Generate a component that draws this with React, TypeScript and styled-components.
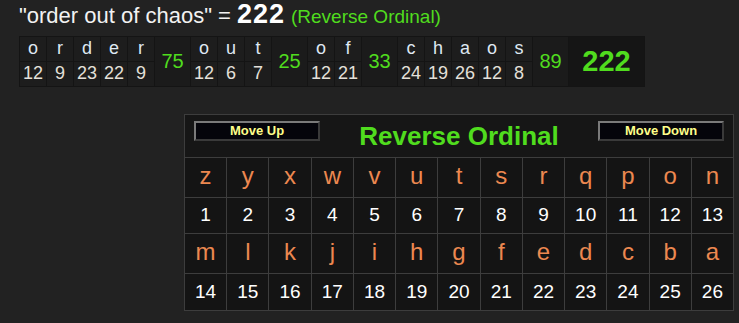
import React from "react";
import styled, { createGlobalStyle } from "styled-components";

const GlobalStyle = createGlobalStyle`
  body {
    margin: 0;
    background: #222222;
    font-family: "Liberation Sans", Arial, sans-serif;
  }
`;

const GREEN = "#50dc1e";
const LINE = "#3d3d3d";

const Page = styled.div`
  width: 739px;
  height: 323px;
  overflow: hidden;
`;

const Phrase = styled.div`
  display: flex;
  align-items: baseline;
  gap: 6px;
  padding-left: 19px;
  color: #f2f2f2;
  line-height: 1.1;
`;

const PhraseText = styled.span`
  font-size: 22px;
`;

const PhraseTotal = styled.span`
  font-size: 27px;
  font-weight: bold;
  letter-spacing: 1px;
  color: #ffffff;
`;

const PhraseCipher = styled.span`
  font-size: 19px;
  color: ${GREEN};
`;

const Breakdown = styled.table`
  margin: 6px 0 0 19px;
  border-collapse: separate;
  border-spacing: 1px;
  background: #141414;
`;

const LetterCell = styled.td<{ $value?: boolean }>`
  width: 26px;
  height: 24px;
  padding: 0;
  background: #1d1d1d;
  text-align: center;
  vertical-align: middle;
  font-size: 18px;
  color: ${(p) => (p.$value ? "#e4e0da" : "#dfe8f2")};
`;

const SumCell = styled.td<{ $total?: boolean }>`
  width: ${(p) => (p.$total ? "75px" : "35px")};
  padding: 0;
  background: ${(p) => (p.$total ? "#151515" : "#1b1b1b")};
  text-align: center;
  vertical-align: middle;
  color: ${GREEN};
  font-size: ${(p) => (p.$total ? "29px" : "20px")};
  font-weight: ${(p) => (p.$total ? "bold" : "normal")};
`;

const Panel = styled.div`
  box-sizing: border-box;
  width: 550px;
  margin: 27px 0 0 184px;
  border: 1px solid ${LINE};
  background: #161616;
`;

const PanelHeader = styled.div`
  box-sizing: border-box;
  height: 43px;
  display: grid;
  grid-template-columns: 1fr auto 1fr;
  align-items: start;
  padding: 6px 9px 0;
  border-bottom: 1px solid ${LINE};
`;

const MoveButton = styled.button<{ $side: "start" | "end" }>`
  justify-self: ${(p) => p.$side};
  box-sizing: border-box;
  width: 126px;
  height: 20px;
  padding: 0;
  border: 2px solid;
  border-color: #7a7a7a #3a3a3a #3a3a3a #7a7a7a;
  background: #05050b;
  color: #ffff8a;
  font-family: "Liberation Sans", Arial, sans-serif;
  font-size: 13px;
  font-weight: bold;
  line-height: 16px;
`;

const CipherTitle = styled.div`
  font-size: 26px;
  font-weight: bold;
  line-height: 30px;
  color: ${GREEN};
`;

const ChartGrid = styled.div`
  display: grid;
  grid-template-columns: repeat(13, 1fr);
  grid-template-rows: 39px 35px 39px 36px;
  gap: 1px;
  background: ${LINE};
`;

const ChartCell = styled.div<{ $kind: "letter" | "number" }>`
  display: flex;
  align-items: center;
  justify-content: center;
  background: #141414;
  font-size: ${(p) => (p.$kind === "letter" ? "24px" : "19px")};
  color: ${(p) => (p.$kind === "letter" ? "#ec8850" : "#ffffff")};
  padding-bottom: ${(p) => (p.$kind === "letter" ? "3px" : "0")};
`;

const reverseOrdinal = (ch: string) => 26 - (ch.charCodeAt(0) - 97);

const phrase = "order out of chaos";
const words = phrase.split(" ");
const wordSum = (w: string) => [...w].reduce((s, c) => s + reverseOrdinal(c), 0);
const total = words.reduce((s, w) => s + wordSum(w), 0);

const alphabet = "zyxwvutsrqponmlkjihgfedcba".split("");
const chartRows = [alphabet.slice(0, 13), alphabet.slice(13)];

export default function App() {
  return (
    <Page>
      <GlobalStyle />
      <Phrase>
        <PhraseText>"{phrase}" =</PhraseText>
        <PhraseTotal>{total}</PhraseTotal>
        <PhraseCipher>(Reverse Ordinal)</PhraseCipher>
      </Phrase>

      <Breakdown>
        <tbody>
          <tr>
            {words.map((w) => (
              <React.Fragment key={w}>
                {[...w].map((c, i) => (
                  <LetterCell key={i}>{c}</LetterCell>
                ))}
                <SumCell rowSpan={2}>{wordSum(w)}</SumCell>
              </React.Fragment>
            ))}
            <SumCell rowSpan={2} $total>
              {total}
            </SumCell>
          </tr>
          <tr>
            {words.map((w) =>
              [...w].map((c, i) => (
                <LetterCell key={w + i} $value>
                  {reverseOrdinal(c)}
                </LetterCell>
              ))
            )}
          </tr>
        </tbody>
      </Breakdown>

      <Panel>
        <PanelHeader>
          <MoveButton $side="start">Move Up</MoveButton>
          <CipherTitle>Reverse Ordinal</CipherTitle>
          <MoveButton $side="end">Move Down</MoveButton>
        </PanelHeader>
        <ChartGrid>
          {chartRows.map((row) => (
            <React.Fragment key={row[0]}>
              {row.map((c) => (
                <ChartCell key={c} $kind="letter">
                  {c}
                </ChartCell>
              ))}
              {row.map((c) => (
                <ChartCell key={c + "n"} $kind="number">
                  {reverseOrdinal(c)}
                </ChartCell>
              ))}
            </React.Fragment>
          ))}
        </ChartGrid>
      </Panel>
    </Page>
  );
}
